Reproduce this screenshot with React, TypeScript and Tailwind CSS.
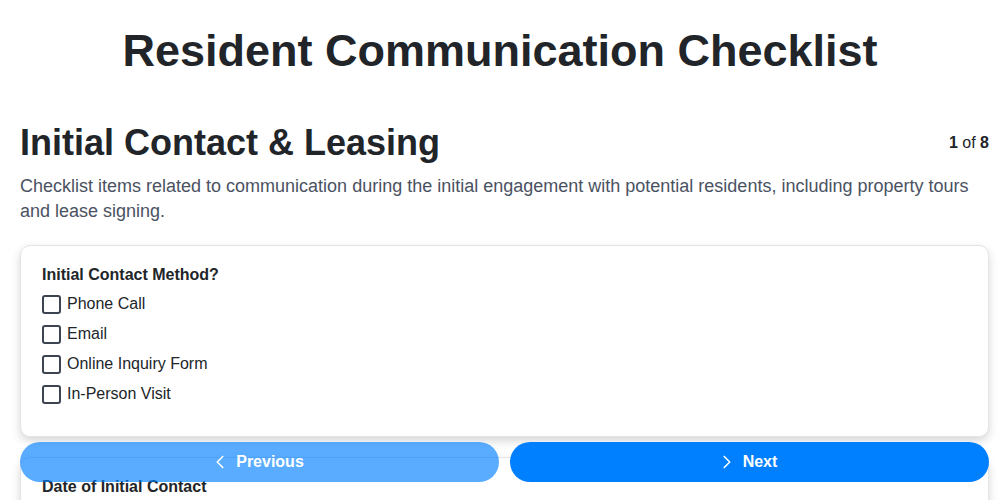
import React from "react";
import { ChevronLeft, ChevronRight } from "lucide-react";

const options = ["Phone Call", "Email", "Online Inquiry Form", "In-Person Visit"];

export default function App() {
  return (
    <div
      className="min-h-[500px] bg-white text-[#212529]"
      style={{ fontFamily: '"Liberation Sans", Arial, sans-serif' }}
    >
      <h1 className="pt-[24px] text-center text-[45px] font-bold leading-[54px] text-[#212529]">
        Resident Communication Checklist
      </h1>

      <div className="pl-5 pr-[11px] pb-[120px]">
        <div className="mt-[43px] flex items-center justify-between">
          <h2 className="text-[36px] font-bold leading-[43px] text-[#212529]">
            Initial Contact &amp; Leasing
          </h2>
          <div className="text-[16px] text-[#212529]">
            <span className="font-bold">1</span> of <span className="font-bold">8</span>
          </div>
        </div>

        <p className="mt-[10px] pr-[9px] text-[18px] leading-[25px] text-[#4a5262]">
          Checklist items related to communication during the initial engagement with potential
          residents, including property tours and lease signing.
        </p>

        <div className="mt-[21px] rounded-[10px] border border-[#e3e4e8] bg-white px-[21px] pt-5 pb-[27px] shadow-[0_4px_10px_rgba(0,0,0,0.16)]">
          <div className="text-[16px] font-bold leading-[18px] text-[#212529]">
            Initial Contact Method?
          </div>
          <div className="mt-[5px]">
            {options.map((o) => (
              <label key={o} className="flex h-[30px] items-center gap-[6px]">
                <span className="block h-[19px] w-[19px] rounded-[3px] border-2 border-[#3d4451] bg-white" />
                <span className="text-[16px] text-[#212529]">{o}</span>
              </label>
            ))}
          </div>
        </div>

        <div className="mt-[20px] rounded-[10px] border border-[#e3e4e8] bg-white px-[21px] pt-5 pb-[27px] shadow-[0_4px_10px_rgba(0,0,0,0.16)]">
          <div className="text-[16px] font-bold leading-[18px] text-[#212529]">
            Date of Initial Contact
          </div>
          <div className="mt-[10px] h-[38px] rounded-[6px] border border-[#ced4da]" />
        </div>
      </div>

      <div className="fixed bottom-[18px] left-5 right-[11px] grid grid-cols-2 gap-[11px]">
        <button className="flex h-10 items-center justify-center gap-[5px] rounded-full bg-[#0080ff] text-[16px] font-bold text-white opacity-[0.65]">
          <ChevronLeft size={22} strokeWidth={1.8} />
          <span className="mr-[6px]">Previous</span>
        </button>
        <button className="flex h-10 items-center justify-center gap-[5px] rounded-full bg-[#0080ff] text-[16px] font-bold text-white">
          <ChevronRight size={22} strokeWidth={1.8} />
          <span className="mr-[6px]">Next</span>
        </button>
      </div>
    </div>
  );
}
